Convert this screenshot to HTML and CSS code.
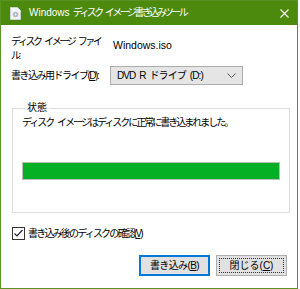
FILE: index.html
```html
<!DOCTYPE html>
<html lang="ja">
<head>
<meta charset="utf-8">
<link rel="stylesheet" href="styles.css">
</head>
<body>
<div class="window">
  <div class="titlebar">
    <svg class="app-icon" width="11" height="13" viewBox="0 0 11 13">
      <path d="M0.5 0.5 H7.5 L10.5 3.5 V12.5 H0.5 Z" fill="#f4f4f4" stroke="#d0d0d0"/>
      <circle cx="5.5" cy="7.5" r="2.8" fill="#b8b8c8"/>
      <circle cx="5.5" cy="7.5" r="0.9" fill="#f4f4f4"/>
    </svg>
    <span class="title">Windows<span class="title-jp"> ディスク イメージ書き込みツール</span></span>
    <svg class="close" width="9" height="9" viewBox="0 0 9 9">
      <path d="M0.5 0.5 L8.5 8.5 M8.5 0.5 L0.5 8.5" stroke="#ffffff" stroke-width="1.1"/>
    </svg>
  </div>
  <div class="content">
    <div class="field-row file-row">
      <div class="label file-label">ディスク イメージ ファイル:</div>
      <div class="value">Windows.iso</div>
    </div>
    <div class="field-row drive-row">
      <div class="label drive-label">書き込み用ドライブ(<u>D</u>):</div>
      <div class="select">
        <span class="select-text">DVD R ドライブ (D:)</span>
        <svg width="9" height="6" viewBox="0 0 9 6"><path d="M0.5 0.5 L4.5 4.5 L8.5 0.5" fill="none" stroke="#555" stroke-width="1"/></svg>
      </div>
    </div>
    <fieldset class="status">
      <legend>状態</legend>
      <div class="status-text">ディスク イメージはディスクに正常に書き込まれました。</div>
      <div class="progress"><div class="progress-fill" style="width:100%"></div></div>
    </fieldset>
    <label class="check">
      <span class="box">
        <svg width="11" height="11" viewBox="0 0 11 11"><path d="M1.5 5.5 L4 8 L9.5 2" fill="none" stroke="#222" stroke-width="1.2"/></svg>
      </span>
      <span class="check-text">書き込み後のディスクの確認(<u>V</u>)</span>
    </label>
    <div class="buttons">
      <button class="btn default"><span class="btn-text">書き込み(<u>B</u>)</span></button>
      <button class="btn focus"><span class="focus-ring">閉じる(<u>C</u>)</span></button>
    </div>
  </div>
</div>
</body>
</html>
```
FILE: styles.css
```css
* { box-sizing: border-box; }
html, body { margin: 0; padding: 0; background: #ffffff; }
body {
  width: 300px;
  height: 289px;
  font-family: "Liberation Sans", "Noto Sans CJK JP", sans-serif;
  font-size: 10px;
  color: #000000;
}
.window {
  width: 298px;
  height: 289px;
  border: 1px solid #5b9224;
  background: #ffffff;
  display: flex;
  flex-direction: column;
}
.titlebar {
  height: 24px;
  flex: none;
  background: #4c8a0e;
  display: flex;
  align-items: center;
  padding-left: 9px;
  padding-right: 8px;
  color: #ffffff;
}
.app-icon { flex: none; margin-top: 1px; }
.title {
  margin-left: 8px;
  font-size: 10px;
  line-height: 14px;
  flex: 1;
  white-space: nowrap;
}
.title-jp { letter-spacing: -2.6px; word-spacing: 3px; }
.close { flex: none; }
.content {
  flex: 1;
  padding: 10px 9px 0 10px;
  display: flex;
  flex-direction: column;
}
.field-row {
  display: flex;
  align-items: center;
}
.label { line-height: 14px; white-space: nowrap; }
.file-label {
  width: 92px;
  margin-right: 10px;
  white-space: normal;
  letter-spacing: -2.4px;
  word-spacing: 3px;
}
.drive-label { width: 99px; letter-spacing: -1.5px; }
.value { font-size: 10.5px; line-height: 14px; align-self: flex-start; padding-top: 3px; }
.drive-row { margin-top: 3px; }
.select {
  width: 133px;
  height: 19px;
  background: #e5e5e5;
  border: 1px solid #acacac;
  display: flex;
  align-items: center;
  justify-content: space-between;
  padding: 0 6px 0 6px;
  line-height: 14px;
}
.select-text { letter-spacing: -0.9px; word-spacing: 2px; }
.status {
  margin: 16px 0 0 1px;
  width: 278px;
  height: 112px;
  flex: none;
  border: 1px solid #dcdcdc;
  padding: 0 9px 0 9px;
}
.status legend {
  padding: 0 2px;
  margin-left: 3px;
  line-height: 14px;
}
.status-text { line-height: 15px; margin-top: 0; letter-spacing: -2px; word-spacing: 3px; }
.progress {
  margin-top: 32px;
  height: 18px;
  border: 1px solid #bcbcbc;
  background: #e6e6e6;
}
.progress-fill { height: 100%; background: #06b025; }
.check {
  margin-top: 13px;
  display: flex;
  align-items: center;
  line-height: 15px;
}
.check-text { letter-spacing: -1.8px; }
.box {
  width: 13px;
  height: 13px;
  border: 1px solid #333333;
  display: flex;
  align-items: center;
  justify-content: center;
  margin-right: 3px;
  margin-left: 1px;
}
.buttons {
  margin-top: 14px;
  display: flex;
  justify-content: flex-end;
  gap: 6px;
  padding-right: 1px;
}
.btn {
  width: 71px;
  height: 21px;
  padding: 0;
  font: inherit;
  color: #000000;
  background: #e1e1e1;
  border: 1px solid #adadad;
  line-height: 14px;
}
.btn-text { letter-spacing: -0.6px; }
.btn.default { border: 2px solid #0078d7; }
.btn.focus { padding: 2px; }
.focus-ring {
  display: block;
  height: 100%;
  border: 1px dotted #333333;
  line-height: 13px;
}
u { text-decoration: underline; text-underline-offset: 1px; }
```
